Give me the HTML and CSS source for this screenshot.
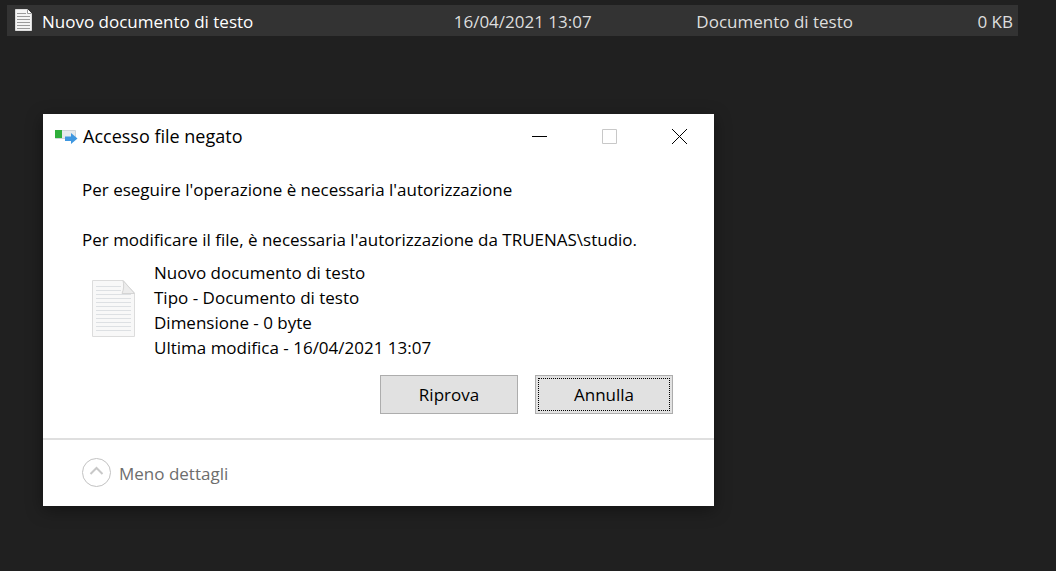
FILE: index.html
```html
<!DOCTYPE html>
<html lang="it">
<head>
  <meta charset="UTF-8" />
  <meta name="viewport" content="width=device-width, initial-scale=1" />
  <title>Accesso file negato</title>
  <link rel="stylesheet" href="styles.css">
</head>
<body>
  <main class="esplora">
    <table class="lista-file">
      <tr>
        <td class="col-nome">
          <div class="nome-file">
            <svg width="18" height="24" viewBox="0 0 18 24" aria-hidden="true">
              <path d="M0.5 0.5H12.5L16.5 4.5V21.5H0.5Z" fill="#f4f4f4" stroke="#dcdcdc" />
              <path d="M12.5 0.5V4.5H16.5" fill="#fff" stroke="#999" />
              <path d="M2 4.5H11M2 7.5H15M2 10.5H15M2 13.5H15M2 16.5H15M2 19.5H15" stroke="#9a9a9a" />
            </svg>
            <span>Nuovo documento di testo</span>
          </div>
        </td>
        <td class="col-data">16/04/2021 13:07</td>
        <td class="col-tipo">Documento di testo</td>
        <td class="col-dimensione">0 KB</td>
      </tr>
    </table>
  </main>

  <section class="finestra" role="dialog" aria-labelledby="titolo">
    <header class="barra-titolo">
      <svg width="24" height="16" viewBox="0 0 24 16" aria-hidden="true">
        <path d="M0.5 2.5H20.5V10.5H0.5Z" fill="#e6eaec" stroke="#cfd5d8" />
        <path d="M0 2H7V10H0Z" fill="#2fae3b" />
        <path d="M10 8.500H16V5L22.500 10.500L16 16V13H10Z" fill="#3f97e0" />
      </svg>
      <h1 id="titolo">Accesso file negato</h1>
      <div class="controlli">
        <button type="button" aria-label="Riduci a icona">
          <svg width="15" height="15" viewBox="0 0 15 15"><path d="M0 7.5H15" stroke="#000" /></svg>
        </button>
        <button type="button" aria-label="Ingrandisci" disabled>
          <svg width="15" height="15" viewBox="0 0 15 15"><path d="M0.5 0.5H14.5V14.5H0.5Z" fill="none" stroke="#c8c8c8" /></svg>
        </button>
        <button type="button" aria-label="Chiudi">
          <svg width="15" height="15" viewBox="0 0 15 15"><path d="M0 0L15 15M15 0L0 15" stroke="#000" /></svg>
        </button>
      </div>
    </header>

    <div class="contenuto">
      <p>Per eseguire l'operazione è necessaria l'autorizzazione</p>
      <p>Per modificare il file, è necessaria l'autorizzazione da TRUENAS\studio.</p>
      <div class="file">
        <svg width="44" height="60" viewBox="0 0 44 60" aria-hidden="true">
          <path d="M0.5 0.5H31L42.500 13V56.500H0.5Z" fill="#f8f8f8" stroke="#dcdcdc" />
          <path d="M31 0.5C32 5 32 9 30 13.500H42.500Z" fill="#ececec" stroke="#d4d4d4" />
          <path d="M4 6.500H29M4 10.500H29M4 14.500H39M4 18.500H39M4 22.500H39M4 26.500H39M4 30.500H39M4 34.500H39M4 38.500H39M4 42.500H39M4 46.500H39M4 50.500H39" stroke="#dde0e3" />
        </svg>
        <ul class="dettagli-file">
          <li>Nuovo documento di testo</li>
          <li>Tipo - Documento di testo</li>
          <li>Dimensione - 0 byte</li>
          <li>Ultima modifica - 16/04/2021 13:07</li>
        </ul>
      </div>
      <div class="azioni">
        <button type="button" class="btn">Riprova</button>
        <button type="button" class="btn btn-attivo">Annulla</button>
      </div>
    </div>

    <footer class="piede">
      <button type="button" class="btn-dettagli">
        <svg width="30" height="30" viewBox="0 0 30 30" aria-hidden="true">
          <circle cx="14.500" cy="14.500" r="14" fill="none" stroke="#c2c2c2" />
          <path d="M8.500 16L14.500 10L20.500 16" fill="none" stroke="#c8c8c8" stroke-width="2" />
        </svg>
        <span>Meno dettagli</span>
      </button>
    </footer>
  </section>
</body>
</html>
```

FILE: styles.css
```css
* { box-sizing: border-box; }
body { margin: 0; min-height: 100vh; background: #202020; color: #000; font-family: "Open Sans", "Noto Sans", sans-serif; font-size: 17px; line-height: 25px; }
button { font: inherit; color: inherit; }
svg { display: block; flex: none; }

.esplora { padding: 5px 38px 0 7px; }
.lista-file { width: 100%; table-layout: fixed; border-collapse: collapse; background: #333; color: #dedede; }
.lista-file td { height: 31px; padding: 1px 5px 0 12px; white-space: nowrap; }
.lista-file .col-nome { width: 43%; padding-left: 8px; }
.col-data { width: 24%; }
.col-tipo { width: 23%; }
.col-dimensione { text-align: right; }
.nome-file { display: flex; align-items: center; gap: 9px; color: #fff; }

.finestra { position: absolute; top: 114px; left: 43px; width: 671px; max-width: calc(100% - 43px); background: #fff; box-shadow: 0 4px 16px rgba(0,0,0,0.4); }
.barra-titolo { display: flex; align-items: center; height: 44px; padding-left: 12px; gap: 4px; }
.barra-titolo h1 { margin: 0; font-size: 18px; font-weight: 400; }
.controlli { display: flex; align-self: stretch; margin-left: auto; }
.controlli button { display: flex; align-items: center; justify-content: center; width: 70px; border: none; background: none; padding: 0; }

.contenuto { padding: 19px 41px 24px 39px; }
.contenuto p { margin: 0 0 25px; }
.contenuto p + p { margin-bottom: 8px; }
.file { display: flex; align-items: center; gap: 18px; padding-left: 10px; }
.dettagli-file { margin: 0; padding: 0; list-style: none; }
.azioni { display: flex; justify-content: flex-end; gap: 17px; margin-top: 15px; }
.btn { width: 138px; height: 39px; padding: 0; border: 1px solid #adadad; background: #e1e1e1; }
.btn-attivo { outline: 1px dotted #000; outline-offset: -4px; }

.piede { padding: 18px 39px; border-top: 2px solid #dfdfdf; }
.btn-dettagli { display: flex; align-items: center; gap: 7px; padding: 0; border: none; background: none; color: #6d6d6d; }
```
